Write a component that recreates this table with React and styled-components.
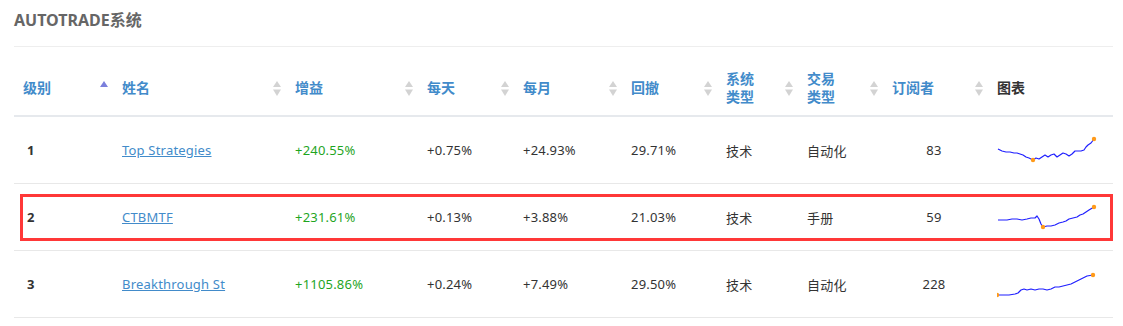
import React from "react";
import styled, { createGlobalStyle } from "styled-components";

const Global = createGlobalStyle`
  html, body { margin: 0; padding: 0; background: #fff; }
  body { font-family: "Noto Sans", "Noto Sans CJK SC", sans-serif; color: #333; }
`;

const Page = styled.div`
  width: 1099px;
  padding: 0 10px 0 14px;
`;

const Heading = styled.div`
  padding: 9px 0 15px;
  border-bottom: 1px solid #eeeeee;
`;

const Title = styled.h2`
  margin: 0;
  font-size: 16px;
  line-height: 22px;
  font-weight: 700;
  color: #666;
`;

const TableWrap = styled.div`
  position: relative;
  margin-top: 15px;
`;

const Table = styled.table`
  width: 1099px;
  border-collapse: collapse;
  table-layout: fixed;
`;

const Th = styled.th`
  padding: 8px 5px 9px 9px;
  text-align: left;
  vertical-align: middle;
  font-size: 14px;
  line-height: 18px;
  font-weight: 700;
  color: ${(p) => (p.$plain ? "#333" : "#428bca")};
  border-bottom: 2px solid #e6e9ed;
`;

const HeadInner = styled.div`
  display: flex;
  align-items: center;
  justify-content: space-between;
`;

const Td = styled.td`
  height: 66px;
  padding: 0 ${(p) => p.$padR || 0}px 0 ${(p) => (p.$pad !== undefined ? p.$pad : 9)}px;
  vertical-align: middle;
  font-size: 13px;
  letter-spacing: 0.2px;
  text-align: ${(p) => p.$align || "left"};
  font-weight: ${(p) => (p.$bold ? 700 : 400)};
  color: ${(p) => (p.$green ? "#1fa51f" : "#333")};
  border-bottom: 1px solid #e8e8e8;
  white-space: nowrap;
  overflow: hidden;
`;

const NameLink = styled.a`
  color: #428bca;
  text-decoration: underline;
  cursor: pointer;
`;

const Highlight = styled.div`
  position: absolute;
  left: 6px;
  top: 132px;
  width: 1087px;
  height: 41px;
  border: 3px solid #ff3838;
  pointer-events: none;
`;

const SortIcon = ({ active }) => (
  <svg width="8" height="15" viewBox="0 0 8 15" style={{ flex: "none" }}>
    <polygon points="4,0 8,6 0,6" fill={active ? "#7b7fdc" : "#d3d3d3"} />
    {!active && <polygon points="0,8.5 8,8.5 4,15" fill="#d3d3d3" />}
  </svg>
);

const Spark = ({ pts, dots }) => {
  const d = pts.map((p) => p.join(",")).join(" ");
  return (
    <svg width="100" height="28" viewBox="0 0 100 28" style={{ display: "block" }}>
      <polyline points={d} fill="none" stroke="#1f1fff" strokeWidth="1.2" strokeLinejoin="round" />
      {dots.map((i) => (
        <circle key={i} cx={pts[i][0]} cy={pts[i][1]} r="2.2" fill="#ff9a1a" />
      ))}
    </svg>
  );
};

const cols = [
  { label: "级别", w: 99, active: true },
  { label: "姓名", w: 173 },
  { label: "增益", w: 132 },
  { label: "每天", w: 96 },
  { label: "每月", w: 108 },
  { label: "回撤", w: 95 },
  { label: ["系统", "类型"], w: 81 },
  { label: ["交易", "类型"], w: 85 },
  { label: "订阅者", w: 105 },
  { label: "图表", w: 125, plain: true },
];

const rows = [
  {
    rank: 1, name: "Top Strategies", gain: "+240.55%", day: "+0.75%", month: "+24.93%",
    dd: "29.71%", sys: "技术", trade: "自动化", subs: 83,
    pts: [[1,13],[5,15],[9,16],[13,16],[17,17],[20,17],[23,18],[26,19],[29,21],[32,22],[36,24],[39,22],[42,23],[45,21],[48,19],[51,21],[54,19],[57,18],[60,21],[63,19],[66,17],[69,18],[72,20],[75,18],[78,15],[81,15],[84,15],[87,14],[89,11],[91,9],[94,7],[97,3]],
    dots: [10, 31],
  },
  {
    rank: 2, name: "CTBMTF", gain: "+231.61%", day: "+0.13%", month: "+3.88%",
    dd: "21.03%", sys: "技术", trade: "手册", subs: 59,
    pts: [[1,17],[6,17],[10,17],[15,16],[20,16],[25,17],[30,16],[34,15],[38,15],[40,13],[42,16],[44,21],[46,24],[50,23],[54,23],[58,22],[62,20],[66,19],[69,18],[72,16],[76,15],[80,14],[83,12],[86,11],[89,9],[92,7],[97,4]],
    dots: [12, 26],
  },
  {
    rank: 3, name: "Breakthrough St", gain: "+1105.86%", day: "+0.24%", month: "+7.49%",
    dd: "29.50%", sys: "技术", trade: "自动化", subs: 228,
    pts: [[0,25],[6,25],[12,25],[18,24],[21,23],[24,20],[27,19],[30,20],[34,19],[38,20],[42,19],[46,19],[50,20],[54,19],[58,17],[62,17],[66,16],[70,15],[74,14],[78,12],[82,10],[86,8],[90,6],[96,5]],
    dots: [0, 23],
  },
];

export default function App() {
  return (
    <>
      <Global />
      <Page>
        <Heading>
          <Title>AUTOTRADE系统</Title>
        </Heading>
        <TableWrap>
          <Table>
            <colgroup>
              {cols.map((c, i) => (
                <col key={i} style={{ width: c.w }} />
              ))}
            </colgroup>
            <thead>
              <tr>
                {cols.map((c, i) => (
                  <Th key={i} $plain={c.plain}>
                    <HeadInner>
                      <span>
                        {Array.isArray(c.label) ? (
                          <>
                            {c.label[0]}
                            <br />
                            {c.label[1]}
                          </>
                        ) : (
                          c.label
                        )}
                      </span>
                      {!c.plain && <SortIcon active={c.active} />}
                    </HeadInner>
                  </Th>
                ))}
              </tr>
            </thead>
            <tbody>
              {rows.map((r) => (
                <tr key={r.rank}>
                  <Td $pad={13} $bold>{r.rank}</Td>
                  <Td><NameLink>{r.name}</NameLink></Td>
                  <Td $green>{r.gain}</Td>
                  <Td>{r.day}</Td>
                  <Td>{r.month}</Td>
                  <Td>{r.dd}</Td>
                  <Td>{r.sys}</Td>
                  <Td>{r.trade}</Td>
                  <Td $align="center" $pad={0} $padR={3}>{r.subs}</Td>
                  <Td><Spark pts={r.pts} dots={r.dots} /></Td>
                </tr>
              ))}
            </tbody>
          </Table>
          <Highlight />
        </TableWrap>
      </Page>
    </>
  );
}
